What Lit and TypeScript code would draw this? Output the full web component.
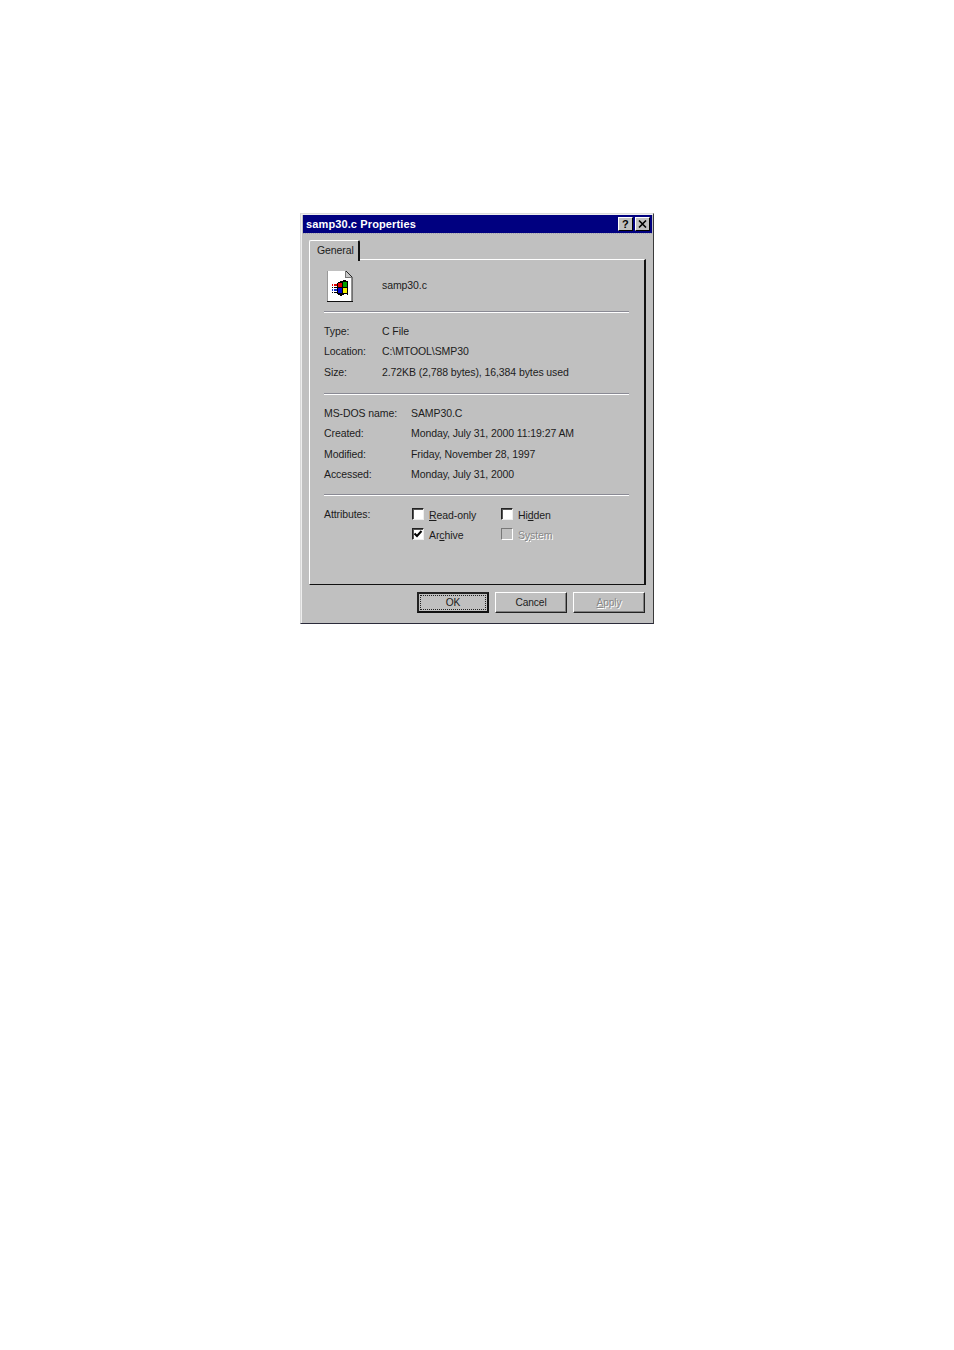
import { LitElement, html, css } from "lit";
import { customElement } from "lit/decorators.js";

@customElement("app-root")
export class AppRoot extends LitElement {
  static styles = css`
    :host { display: block; height: 1350px; background: #fff; font-family: "Liberation Sans", Arial, sans-serif; font-size: 10.5px; letter-spacing: -0.09px; color: #1c1c1c; }
    .page { padding: 213px 0 0 300px; box-sizing: border-box; }
    .dialog { width: 354px; height: 411px; box-sizing: border-box; background: #c0c0c0; border: 1px solid; border-color: #dcdcdc #3a3a3a #2a2a3a #d8d8d8; padding: 1px 1px 0 2px; display: flex; flex-direction: column; box-shadow: inset 1px 1px 0 #eee; }
    .titlebar { height: 18px; flex: none; background: #000080; color: #fff; display: flex; align-items: center; padding: 0 2px 0 3px; font-size: 11px; font-weight: 700; letter-spacing: 0.12px; }
    .titlebar .t { flex: 1; }
    .dots { height: 1px; flex: none; border-top: 1px dotted #a2a2b0; box-sizing: border-box; }
    .tb { width: 15px; height: 14px; margin-left: 2px; background: #c0c0c0; box-sizing: border-box; border: 1px solid; border-color: #fff #000 #000 #fff; display: flex; align-items: center; justify-content: center; color: #000; font-size: 11px; font-weight: 700; line-height: 12px; }
    .tb svg { display: block; }
    .tabs { margin: 6px 6px 0; display: flex; height: 20px; position: relative; z-index: 1; margin-bottom: -1px; }
    .tab { width: 51px; height: 21px; box-sizing: border-box; background: #c0c0c0; border-top: 1px solid #fff; border-left: 1px solid #fff; border-right: 2px solid #111; border-radius: 2px 2px 0 0; padding-left: 7px; line-height: 18px; font-size: 10.5px; }
    .panel { margin: 0 6px; height: 326px; flex: none; box-sizing: border-box; border: 1px solid; border-color: #fff #111 #111 #fff; border-right-width: 2px; padding: 0 14px 0 14px; }
    .head { display: flex; height: 31px; padding: 11px 0 9px 3px; }
    .head svg { display: block; flex: none; }
    .head .name { margin-left: 29px; line-height: 28px; }
    .sep { height: 2px; background: linear-gradient(#8a8a94 0 1px, #fff 1px 2px); margin-right: 1px; }
    .sec { display: grid; align-items: center; }
    .s1 { grid-template-columns: 58px 1fr; grid-auto-rows: 20.5px; padding: 7.5px 0 11px; }
    .s2 { grid-template-columns: 87px 1fr; grid-auto-rows: 20.5px; padding: 7.5px 0 9.5px; }
    .s3 { grid-template-columns: 88px 89px 1fr; grid-auto-rows: 20px; padding-top: 8px; }
    .chk { display: flex; align-items: center; gap: 5px; }
    .lbl { padding-top: 1px; }
    .box { width: 12px; height: 12px; box-sizing: border-box; flex: none; background: #fff; border: 1px solid; border-color: #222 #eee #eee #222; box-shadow: inset 1px 1px 0 #555; display: flex; }
    .box.off { background: #c0c0c0; border-color: #777 #fff #fff #777; box-shadow: none; }
    .dis { color: #888; text-shadow: 1px 1px 0 #fff; }
    u { text-underline-offset: 1px; }
    .footer { display: flex; justify-content: flex-end; gap: 6px; margin: 7px 7px 0 0; }
    .btn { width: 72px; height: 21px; box-sizing: border-box; border: 1px solid; border-color: #fff #222 #222 #fff; box-shadow: inset -1px -1px 0 #808080; display: flex; align-items: center; justify-content: center; padding-bottom: 1px; font-size: 10.2px; }
    .btn.def { border: 2px solid #111; border-color: #222 #111 #111 #222; box-shadow: none; padding: 1px; }
    .focus { flex: 1; align-self: stretch; border: 1px dotted #222; display: flex; align-items: center; justify-content: center; }
  `;

  render() {
    return html`<div class="page"><div class="dialog">
      <div class="titlebar"><span class="t">samp30.c Properties</span>
        <span class="tb">?</span>
        <span class="tb"><svg width="9" height="8" viewBox="0 0 9 8"><path d="M1 0.5 L8 7.5 M8 0.5 L1 7.5" stroke="#000" stroke-width="1.6"/></svg></span>
      </div>
      <div class="dots"></div>
      <div class="tabs"><div class="tab">General</div></div>
      <div class="panel">
        <div class="head">
          <svg width="26" height="31" viewBox="0 0 26 31" shape-rendering="crispEdges">
            <path d="M0 0H19L25 6V30H0Z" fill="#fff"/>
            <path d="M19 0V6H25Z" fill="#c8c8c8"/>
            <path d="M19 0L25 6V30" fill="none" stroke="#222" stroke-width="1" shape-rendering="auto"/>
            <path d="M0.5 0V30" stroke="#999" stroke-width="1"/>
            <path d="M0 30.5H26" stroke="#111" stroke-width="1"/>
            <path d="M18.5 0V6.5H25" fill="none" stroke="#777" stroke-width="1"/>
            <path d="M10 12L14 10L17 9L21 10V24L18 23L14 25L10 23Z" fill="#000"/>
            <rect x="11" y="12" width="4" height="4" fill="#e00000"/>
            <rect x="16" y="11" width="4" height="5" fill="#00a000"/>
            <rect x="11" y="17" width="4" height="5" fill="#0000d0"/>
            <rect x="16" y="17" width="4" height="5" fill="#f0f000"/>
            <rect x="5" y="13" width="1" height="2" fill="#e00000"/><rect x="7" y="13" width="3" height="2" fill="#e00000"/>
            <rect x="5" y="16" width="1" height="1" fill="#000"/><rect x="7" y="16" width="3" height="1" fill="#000"/>
            <rect x="5" y="18" width="1" height="2" fill="#1030d0"/><rect x="7" y="18" width="3" height="2" fill="#1030d0"/>
            <rect x="5" y="21" width="1" height="1" fill="#000"/><rect x="7" y="21" width="3" height="1" fill="#000"/>
          </svg>
          <span class="name">samp30.c</span>
        </div>
        <div class="sep"></div>
        <div class="sec s1">
          <span>Type:</span><span>C File</span>
          <span>Location:</span><span>C:\\MTOOL\\SMP30</span>
          <span>Size:</span><span>2.72KB (2,788 bytes), 16,384 bytes used</span>
        </div>
        <div class="sep"></div>
        <div class="sec s2">
          <span>MS-DOS name:</span><span>SAMP30.C</span>
          <span>Created:</span><span>Monday, July 31, 2000 11:19:27 AM</span>
          <span>Modified:</span><span>Friday, November 28, 1997</span>
          <span>Accessed:</span><span>Monday, July 31, 2000</span>
        </div>
        <div class="sep"></div>
        <div class="sec s3">
          <span>Attributes:</span>
          <span class="chk"><span class="box"></span><span class="lbl"><u>R</u>ead-only</span></span>
          <span class="chk"><span class="box"></span><span class="lbl">Hi<u>d</u>den</span></span>
          <span></span>
          <span class="chk"><span class="box"><svg width="10" height="10" viewBox="0 0 10 10"><path d="M1.5 4.5L4 7L8.5 2" fill="none" stroke="#000" stroke-width="2"/></svg></span><span class="lbl">Ar<u>c</u>hive</span></span>
          <span class="chk"><span class="box off"></span><span class="lbl dis">S<u>y</u>stem</span></span>
        </div>
      </div>
      <div class="footer">
        <div class="btn def"><span class="focus">OK</span></div>
        <div class="btn">Cancel</div>
        <div class="btn dis"><span><u>A</u>pply</span></div>
      </div>
    </div></div>`;
  }
}
